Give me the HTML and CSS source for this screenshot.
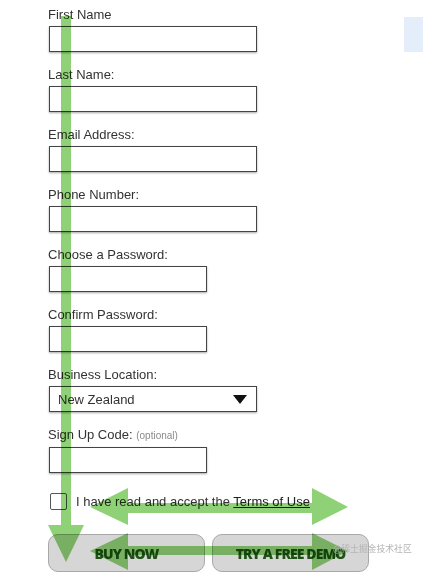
FILE: index.html
```html
<!DOCTYPE html>
<html>
<head>
<meta charset="utf-8">
<link rel="stylesheet" href="styles.css">
</head>
<body>
<div class="page">
  <form class="signup">
    <div class="field"><label class="lbl">First Name</label><input class="input wide" type="text"></div>
    <div class="field"><label class="lbl">Last Name:</label><input class="input wide" type="text"></div>
    <div class="field"><label class="lbl">Email Address:</label><input class="input wide" type="text"></div>
    <div class="field"><label class="lbl">Phone Number:</label><input class="input wide" type="text"></div>
    <div class="field"><label class="lbl">Choose a Password:</label><input class="input narrow" type="password"></div>
    <div class="field"><label class="lbl">Confirm Password:</label><input class="input narrow" type="password"></div>
    <div class="field"><label class="lbl">Business Location:</label>
      <div class="input wide select"><span>New Zealand</span><span class="caret"></span></div>
    </div>
    <div class="field"><label class="lbl">Sign Up Code: <span class="opt">(optional)</span></label><input class="input narrow" type="text"></div>
    <div class="agree"><span class="box"></span><span class="agree-text">I have read and accept the <span class="terms">Terms of Use</span></span></div>
    <div class="buttons">
      <div class="btn">BUY NOW</div>
      <div class="btn">TRY A FREE DEMO</div>
    </div>
  </form>
  <aside class="side"></aside>
  <svg class="arrows" width="423" height="578" viewBox="0 0 423 578">
    <g fill="#8fd176">
      <rect x="61" y="16" width="10" height="510"/>
      <polygon points="48,525 84,525 66,562"/>
      <rect x="127" y="503" width="186" height="10"/>
      <polygon points="128,488 128,525 90,507"/>
      <polygon points="312,488 312,525 348,507"/>
      <rect x="127" y="546" width="186" height="9"/>
      <polygon points="128,533 128,570 90,551"/>
      <polygon points="312,533 312,570 348,551"/>
    </g>
  </svg>
  <div class="watermark">@稀土掘金技术社区</div>
</div>
</body>
</html>
```
FILE: styles.css
```css
html, body {
  margin: 0;
  padding: 0;
  background: #fff;
}
.page {
  position: relative;
  width: 423px;
  height: 578px;
  overflow: hidden;
  display: flex;
  font-family: "Liberation Sans", Arial, sans-serif;
  color: #333;
}
.signup {
  padding: 7px 0 0 48px;
  margin: 0;
  width: 330px;
}
.field {
  margin-bottom: 15px;
}
.lbl {
  display: block;
  font-size: 13px;
  line-height: 15px;
  margin-bottom: 4px;
  color: #333;
}
.opt {
  font-size: 10px;
  color: #8a8a8a;
}
.input {
  display: block;
  box-sizing: border-box;
  height: 26px;
  margin: 0 0 0 1px;
  padding: 0;
  border: 1px solid #444;
  border-radius: 0;
  background: #fff;
  box-shadow: 0 1px 2px rgba(0,0,0,0.35);
  outline: none;
  appearance: none;
}
.wide { width: 208px; }
.narrow { width: 158px; }
.select {
  display: flex;
  align-items: center;
  justify-content: space-between;
  padding: 1px 9px 0 8px;
  font-size: 13px;
  color: #333;
}
.caret {
  width: 0;
  height: 0;
  border-left: 7px solid transparent;
  border-right: 7px solid transparent;
  border-top: 9px solid #111;
}
.agree {
  display: flex;
  align-items: center;
  margin-top: 20px;
  height: 17px;
  font-size: 13px;
  line-height: 15px;
  color: #333;
}
.box {
  box-sizing: border-box;
  width: 17px;
  height: 17px;
  margin-left: 2px;
  border: 1px solid #555;
  border-radius: 2px;
  background: #fff;
  margin-right: 9px;
}
.terms {
  text-decoration: underline;
  color: #222;
}
.buttons {
  display: flex;
  gap: 7px;
  margin-top: 24px;
}
.btn {
  box-sizing: border-box;
  width: 157px;
  height: 38px;
  display: flex;
  align-items: center;
  justify-content: center;
  background: #d6d6d6;
  border: 1px solid #a9a9a9;
  border-radius: 10px;
  font-family: "Open Sans", sans-serif;
  font-weight: 800;
  font-size: 14px;
  letter-spacing: -0.9px;
  color: #1f5214;
  padding-top: 1px;
}
.side {
  margin: 17px 0 0 auto;
  width: 19px;
  height: 35px;
  background: #e3eefa;
}
.arrows {
  position: absolute;
  left: 0;
  top: 0;
  pointer-events: none;
  mix-blend-mode: multiply;
}
.watermark {
  position: absolute;
  left: 333px;
  top: 543px;
  font-family: "Noto Sans CJK SC", sans-serif;
  font-size: 8.8px;
  line-height: 12px;
  color: #b5b5b5;
  white-space: nowrap;
}
```
